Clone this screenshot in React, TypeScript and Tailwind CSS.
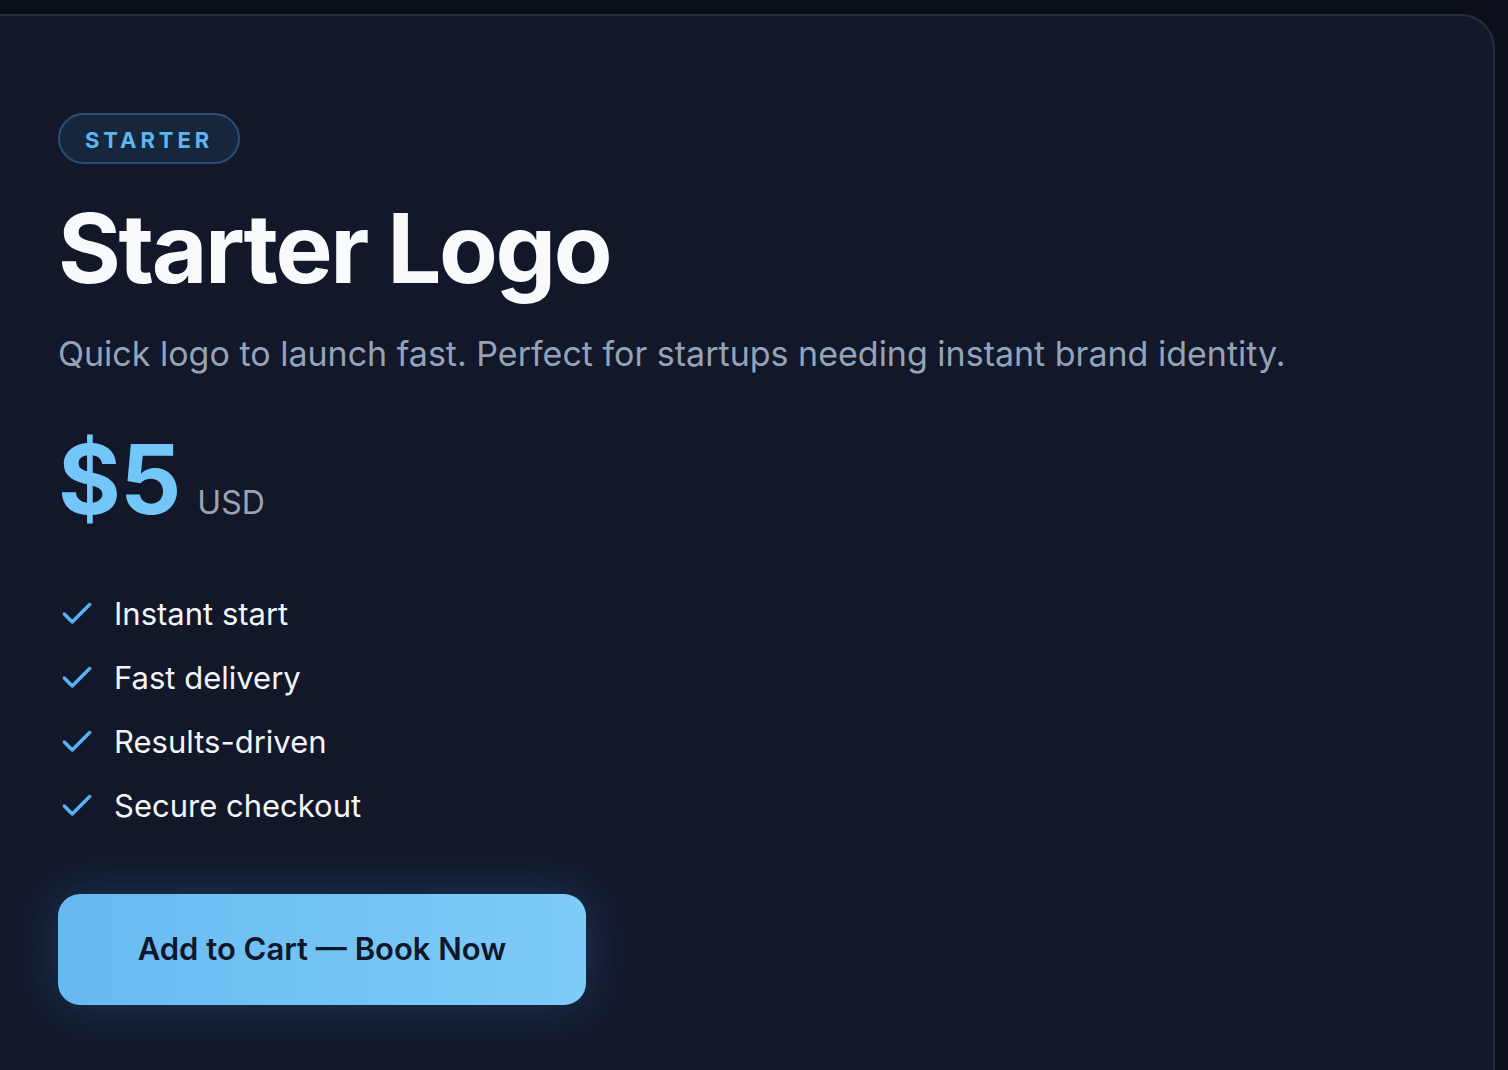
import { Check } from "lucide-react"

const features = ["Instant start", "Fast delivery", "Results-driven", "Secure checkout"]

export default function App() {
  return (
    <div
      className="min-h-[1070px] bg-[#0b0f19] pt-[14px] pr-[13px]"
      style={{ fontFamily: "Inter, 'Noto Sans', sans-serif" }}
    >
      <div className="min-h-[1056px] rounded-tr-[34px] border-t-2 border-r-2 border-[#242d40] bg-[#121829] pl-[58px] pt-[97px]">
        <span className="inline-flex h-[51px] items-center rounded-full border-2 border-[#2a4f74] bg-[#16263d] px-[25px] pt-[3px] text-[22px] font-bold tracking-[0.18em] text-[#5fb6ee]">
          STARTER
        </span>

        <h1 className="mt-[36px] text-[96px] font-bold leading-none tracking-[-0.025em] text-[#f8fafc]">
          Starter Logo
        </h1>

        <p className="mt-[37px] text-[34px] leading-tight text-[#94a3b8]">
          Quick logo to launch fast. Perfect for startups needing instant brand identity.
        </p>

        <div className="mt-[55px] flex items-baseline gap-[17px]">
          <span className="text-[96px] font-bold leading-none tracking-[-0.01em] text-[#72c6f8]">$5</span>
          <span className="text-[32px] text-[#9ca3af]">USD</span>
        </div>

        <ul className="mt-[67px] flex flex-col gap-[24px]">
          {features.map((f) => (
            <li key={f} className="flex items-center gap-[18px] text-[31px] leading-[40px] text-[#f1f5f9]">
              <Check className="h-[38px] w-[38px] text-[#4fb4ef]" strokeWidth={2.2} />
              {f}
            </li>
          ))}
        </ul>

        <button className="mt-[68px] h-[111px] w-[528px] rounded-[22px] bg-gradient-to-r from-[#67baf0] to-[#7fcbf9] text-[31px] font-semibold text-[#0f172a] shadow-[0_0_48px_rgba(56,140,220,0.28)]">
          Add to Cart — Book Now
        </button>
      </div>
    </div>
  )
}
